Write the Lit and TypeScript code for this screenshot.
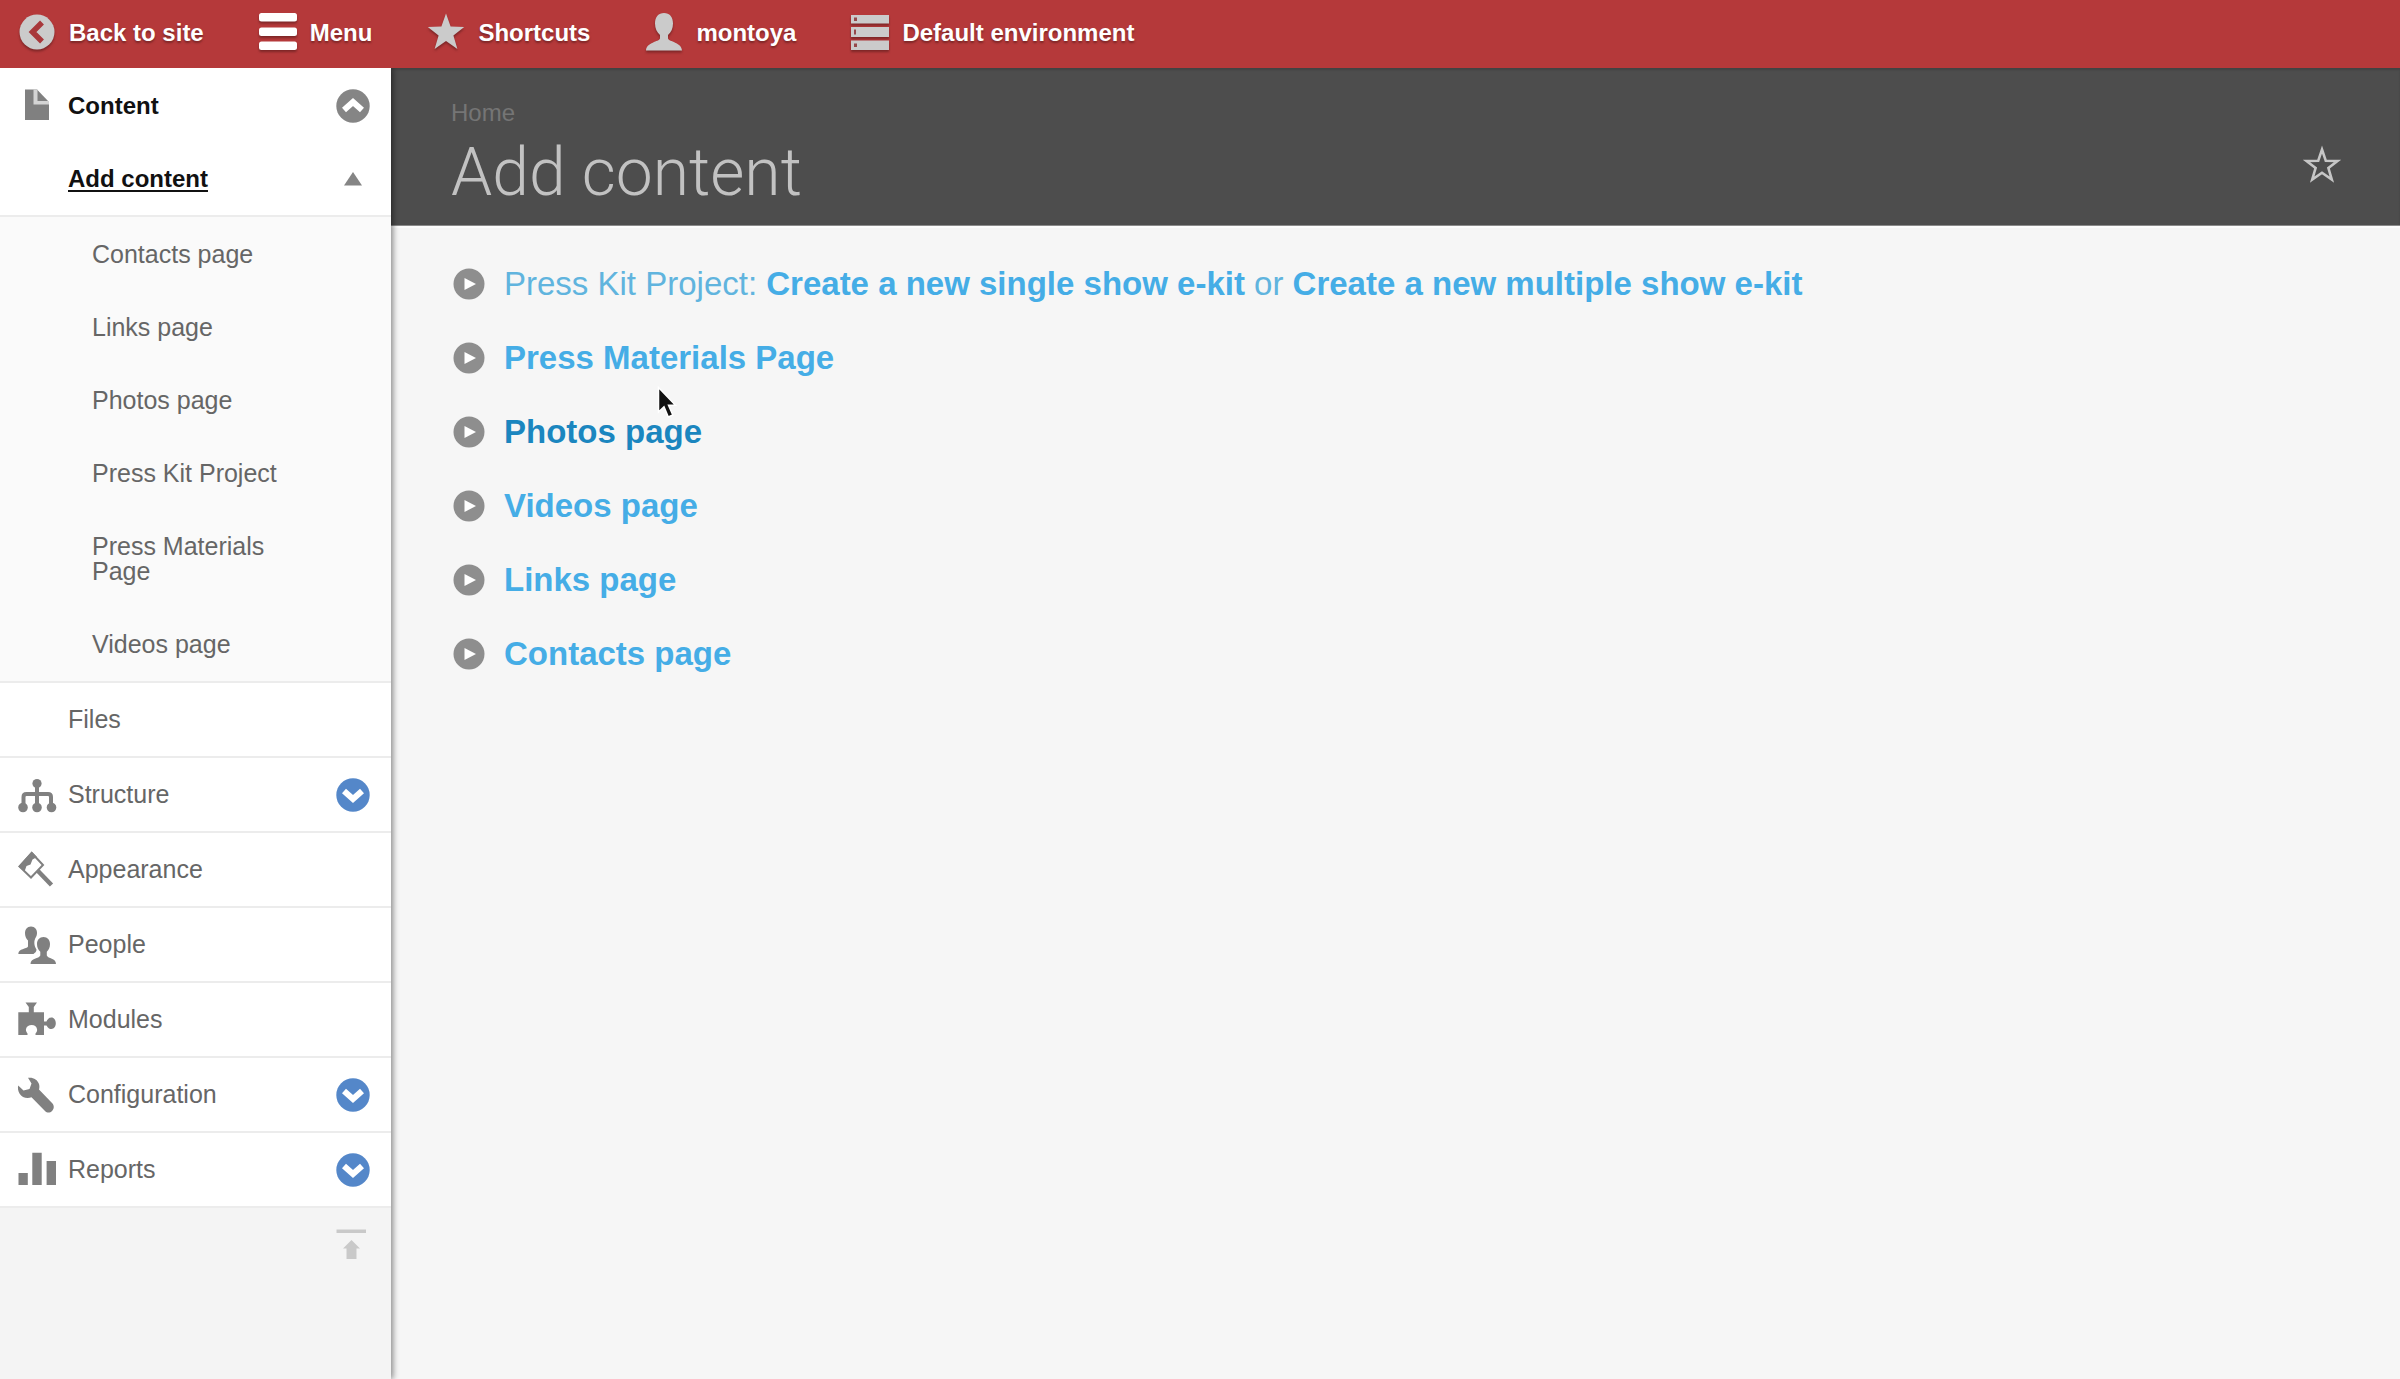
import { LitElement, html, css, svg, nothing } from "lit";
import type { TemplateResult } from "lit";
import { customElement, property } from "lit/decorators.js";
import { classMap } from "lit/directives/class-map.js";

const icons: Record<string, TemplateResult> = {
  back: svg`<circle cx="19" cy="19" r="17.5" fill="currentColor"/>
    <path d="M24 9.500 L14.500 19 L24 28.500" fill="none" stroke="#a8383b" stroke-width="5.5"/>`,
  menu: svg`<rect x="0" y="0" width="38" height="8.5" rx="2.5" fill="currentColor"/>
    <rect x="0" y="14.5" width="38" height="8.5" rx="2.5" fill="currentColor"/>
    <rect x="0" y="28.5" width="38" height="8.5" rx="2.5" fill="currentColor"/>`,
  star: svg`<path fill="currentColor" d="M19 0.5 L23.6 13.6 L37.2 14 L26.4 22.4 L30.4 36 L19 28 L7.6 36 L11.6 22.4 L0.8 14 L14.4 13.6 Z"/>`,
  user: svg`<path fill="currentColor" d="M19 0 C24.5 0 28 4 28 10.5 C28 15.5 26 19.5 23 22 L23 25.5 C24 29 36.5 29 37 37.5 L1 37.5 C1.5 29 14 29 15 25.5 L15 22 C12 19.5 10 15.5 10 10.5 C10 4 13.5 0 19 0 Z"/>`,
  server: svg`<path fill="currentColor" d="M0 2H38V10.5H0Z M0 14H38V24H0Z M0 27.5H38V37H0Z"/>
    <path fill="#96484a" d="M3 4.5H6V8H3Z M3 16.5H5V21.5H3Z M3 30.5H6V34H3Z"/>`,
  content: svg`<path fill="currentColor" d="M7 2.5 H19 L31 15 V33 H7 Z"/>
    <path fill="#d4d4d4" d="M15.5 2.5 H19.5 V14 H31 V17.5 H15.500 Z"/>`,
  structure: svg`<g fill="none" stroke="currentColor" stroke-width="4"><path d="M19 7 V32 M5.5 32 V21 Q5.5 18 8.5 18 H30 Q33 18 33 21 V32"/></g>
    <g fill="currentColor"><circle cx="19" cy="7.5" r="4.6"/><circle cx="5" cy="31.5" r="4.8"/><circle cx="19" cy="31.5" r="4.8"/><circle cx="33.5" cy="31.5" r="4.8"/></g>`,
  appearance: svg`<path d="M13.7 2 L25 14 L13 26.5 L1.5 15.5 Z" fill="none" stroke="currentColor" stroke-width="2"/>
    <path d="M13.7 0.5 L19 6 L14.5 8.5 L12.5 13.5 L8.5 15 L6.5 20.5 L0.3 15.5 Z" fill="currentColor"/>
    <path d="M20 20 L33.5 34" stroke="currentColor" stroke-width="4.5" fill="none"/>`,
  people: svg`<g fill="currentColor"><path d="M13 0.5 C17 0.5 19 3.5 19 7 C19 8.5 18.6 10 18 11 C15.5 14.5 16 20 18.5 23.5 C18.5 26 17 26.5 15.5 28 L0.3 28 C0.5 22 8.5 23.5 10 20.5 V14.5 C8 12.5 7 10 7 7 C7 3.5 9 0.5 13 0.5 Z"/>
    <path d="M25.5 11 C29.5 11 32 14 32 18 C32 21.5 30.7 24 28.8 25.8 V29.5 C30 33 38 31.5 38 38 H12.5 C12.5 31.5 21 33 22.3 29.5 V25.8 C20.3 24 19 21.5 19 18 C19 14 21.5 11 25.5 11 Z"/></g>`,
  modules: svg`<path fill="currentColor" d="M7.5 1.5 H19 L15.8 6 V11.3 H26 V20.5 H28.5 C30 17 32 16.5 33.5 16.5 C36 16.5 37.8 19 37.8 22.3 C37.8 25.6 36 28 33.5 28 C32 28 30 27.5 28.5 24.5 H26 V34 H17.5 V32.5 C19 31 19.3 29.5 19 28 C18.5 25.5 16.5 24 13.7 24 C11 24 8.5 25.5 8 28 C7.7 29.5 8.3 31 9.5 32.5 V34 H0.3 V11.3 H10.8 V6 Z"/>`,
  configuration: svg`<path fill="currentColor" d="M10 1.8 C15 1 19.5 3.5 21 8 C21.6 10 21.5 12 21 13.5 L34.5 27.5 C36.5 30 36 33 34 35 C32 37 29 37 27 35 L13.5 21.3 C9 23.3 4 21.5 1.5 17.5 C0 15 -0.4 12 0.2 9.5 L5.5 14.5 L11.5 13 L13.5 7.5 Z"/>`,
  reports: svg`<path fill="currentColor" d="M0.5 22 H9.8 V34 H0.5Z M14.3 1.7 H23.7 V34 H14.3Z M28.6 10 H38 V34 H28.6Z"/>`,
  chevronDown: svg`<circle cx="19" cy="19" r="16.7" fill="#5487c9"/><path d="M10 15 L19 23 L28 15" fill="none" stroke="#fff" stroke-width="6"/>`,
  chevronUp: svg`<circle cx="19" cy="19" r="16.7" fill="#858585"/><path d="M10 23 L19 15 L28 23" fill="none" stroke="#fff" stroke-width="6"/>`,
  triangle: svg`<path d="M19 12 L28 25.5 H10 Z" fill="#858585"/>`,
  collapse: svg`<path d="M1.5 3.5 H31 V7 H1.5Z M16.5 14 L25 22.5 H21.5 V33 H11.5 V22.5 H8Z" fill="#c9c9c9"/>`,
  play: svg`<circle cx="19" cy="19" r="15.5" fill="#8e8e8e"/><path d="M14.5 13 L26 19 L14.5 25 Z" fill="#fff"/>`,
  starOutline: svg`<path d="M19 3.5 L22.8 14.8 L34.5 15 L25.4 22 L28.8 33.5 L19 26.8 L9.2 33.5 L12.6 22 L3.5 15 L15.2 14.8 Z" fill="none" stroke="#c6c6c6" stroke-width="2.6"/>`,
};

@customElement("ui-icon")
class UiIcon extends LitElement {
  @property() name = "";
  static styles = css`
    :host { display: inline-flex; flex: none; width: 38px; height: 38px; }
    svg { display: block; width: 100%; height: 100%; overflow: visible; }
  `;
  render() {
    return html`<svg viewBox="0 0 38 38" aria-hidden="true">${icons[this.name] ?? nothing}</svg>`;
  }
}

interface MenuEntry { label: string; icon: string; expandable?: boolean; }

const toolbar: MenuEntry[] = [
  { label: "Back to site", icon: "back" },
  { label: "Menu", icon: "menu" },
  { label: "Shortcuts", icon: "star" },
  { label: "montoya", icon: "user" },
  { label: "Default environment", icon: "server" },
];

const subPages = ["Contacts page", "Links page", "Photos page", "Press Kit Project", "Press Materials Page", "Videos page"];

const sections: MenuEntry[] = [
  { label: "Structure", icon: "structure", expandable: true },
  { label: "Appearance", icon: "appearance" },
  { label: "People", icon: "people" },
  { label: "Modules", icon: "modules" },
  { label: "Configuration", icon: "configuration", expandable: true },
  { label: "Reports", icon: "reports", expandable: true },
];

const contentTypes = ["Press Materials Page", "Photos page", "Videos page", "Links page", "Contacts page"];

@customElement("app-root")
class AppRoot extends LitElement {
  static styles = css`
    :host {
      display: flex;
      flex-direction: column;
      min-height: 100vh;
      position: relative;
      background: #f6f6f6;
      font-family: "Liberation Sans", Arial, sans-serif;
      font-size: 25px;
      line-height: 25px;
      color: #666;
    }
    * { box-sizing: border-box; }
    a { color: inherit; text-decoration: none; }
    ul { list-style: none; margin: 0; padding: 0; }
    button { border: 0; padding: 0; background: none; display: flex; cursor: pointer; }

    .toolbar {
      display: flex;
      align-items: center;
      gap: 55px;
      padding: 13px 18px 17px;
      background: #b5393a;
      font-size: 24px;
      font-weight: bold;
    }
    .tool {
      display: flex;
      align-items: center;
      gap: 13px;
      color: #fff;
      text-shadow: 0 2px 2px rgba(70, 20, 20, 0.5);
    }
    .tool ui-icon { color: #cbcbcb; filter: drop-shadow(0 2px 1px rgba(70, 20, 20, 0.5)); }
    .tool.current ui-icon { color: #fff; }

    .body { display: flex; flex: 1; }
    .sidebar {
      flex: none;
      width: 391px;
      z-index: 1;
      background: #f4f4f4;
      box-shadow: 2px 0 6px rgba(0, 0, 0, 0.45);
      clip-path: inset(0 -12px 0 0);
    }
    .tree { padding-top: 1px; background: #fff; }
    .row {
      display: flex;
      align-items: center;
      gap: 12px;
      height: 73px;
      padding: 0 19px 0 18px;
      background: #fff;
    }
    .row a { flex: 1; }
    .row.ruled { height: 75px; border-bottom: 2px solid #ececec; }
    .row.nested { padding-left: 68px; }
    .row.active { color: #111; font-size: 24px; font-weight: bold; }
    .row.trail a { text-decoration: underline; text-decoration-thickness: 2px; text-underline-offset: 3px; }
    .row ui-icon { color: #808080; }
    .sub { padding-top: 1px; background: #fafafa; border-bottom: 2px solid #ececec; }
    .sub a { display: block; padding: 24px 92px; }
    .foot { display: flex; justify-content: flex-end; padding: 18px; }

    main { flex: 1; min-width: 0; }
    .masthead {
      display: flex;
      align-items: center;
      justify-content: space-between;
      padding: 31px 59px 12px 60px;
      background: #4d4d4d;
      border-bottom: 1px solid #8a8a8a;
      box-shadow: inset 0 2px 2px rgba(0, 0, 0, 0.15), 0 2px 0 #fcfcfc;
    }
    .masthead button { margin-top: 18px; }
    .crumb { display: block; font-size: 24px; line-height: 28px; color: #757575; }
    h1 { margin: 6px 0 0; font-family: Roboto, "Liberation Sans", sans-serif; font-size: 66px; line-height: 80px; font-weight: 300; color: #c2c2c2; }
    .types { padding: 21px 59px; font-size: 33px; line-height: 74px; color: #45ade6; }
    .types li { display: flex; align-items: center; gap: 16px; }
    .types a { color: #45ade6; font-weight: bold; }
    .types a.hover { color: #1b86bf; }
    .lead { color: #60b4de; }

    .pointer { position: absolute; left: 657px; top: 385px; width: 20px; height: 34px; }
  `;

  private sectionRow(entry: MenuEntry) {
    return html`<li class="row ruled">
      <ui-icon name=${entry.icon}></ui-icon><a href="#">${entry.label}</a>
      ${entry.expandable
        ? html`<button type="button" aria-label=${`Expand ${entry.label}`}><ui-icon name="chevronDown"></ui-icon></button>`
        : nothing}
    </li>`;
  }

  render() {
    return html`
      <nav class="toolbar" aria-label="Toolbar">
        ${toolbar.map((t) => html`<a href="#" class=${classMap({ tool: true, current: t.label === "Menu" })}>
          <ui-icon name=${t.icon}></ui-icon><span>${t.label}</span></a>`)}
      </nav>
      <div class="body">
        <nav class="sidebar" aria-label="Administration">
          <ul class="tree">
            <li>
              <div class="row active">
                <ui-icon name="content"></ui-icon><a href="#">Content</a>
                <button type="button" aria-label="Collapse Content"><ui-icon name="chevronUp"></ui-icon></button>
              </div>
              <div class="row nested ruled active trail">
                <a href="#">Add content</a>
                <button type="button" aria-label="Collapse Add content"><ui-icon name="triangle"></ui-icon></button>
              </div>
              <ul class="sub">${subPages.map((p) => html`<li><a href="#">${p}</a></li>`)}</ul>
              <div class="row nested ruled"><a href="#">Files</a></div>
            </li>
            ${sections.map((s) => this.sectionRow(s))}
          </ul>
          <div class="foot"><button type="button" aria-label="Horizontal orientation"><ui-icon name="collapse"></ui-icon></button></div>
        </nav>
        <main>
          <header class="masthead">
            <div><a class="crumb" href="#">Home</a><h1>Add content</h1></div>
            <button type="button" aria-label="Add to shortcuts"><ui-icon name="starOutline"></ui-icon></button>
          </header>
          <ul class="types">
            <li><ui-icon name="play"></ui-icon><span class="lead">Press Kit Project: <a href="#">Create a new single show e-kit</a> or <a href="#">Create a new multiple show e-kit</a></span></li>
            ${contentTypes.map((t) => html`<li><ui-icon name="play"></ui-icon><a href="#" class=${classMap({ hover: t === "Photos page" })}>${t}</a></li>`)}
          </ul>
        </main>
      </div>
      <svg class="pointer" viewBox="0 0 20 34" aria-hidden="true">
        <path d="M1.5 2.5 V27 L7 21.8 L11.3 32 L15.8 30 L11.5 20.2 H18.5 Z" fill="#111" stroke="#fff" stroke-width="1.5"/>
      </svg>
    `;
  }
}
